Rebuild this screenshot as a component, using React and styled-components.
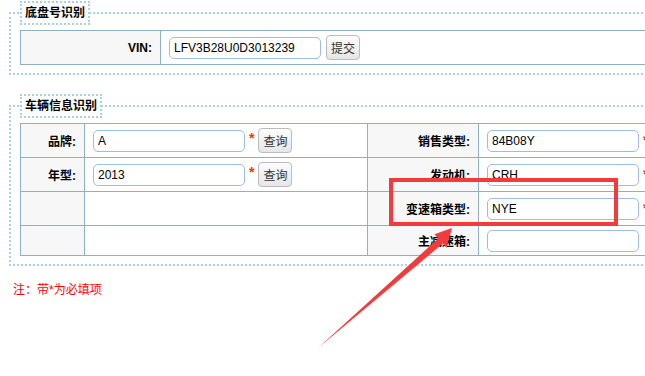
import React from 'react';
import styled, { createGlobalStyle } from 'styled-components';

const GlobalStyle = createGlobalStyle`
  html, body {
    margin: 0;
    padding: 0;
    overflow: hidden;
    background: #fff;
  }
  body {
    font-family: "Liberation Sans", Arial, "Noto Sans CJK SC", sans-serif;
    font-size: 12px;
    color: #000;
  }
`;

const rows = [
  { left: '品牌', leftValue: 'A', right: '销售类型', rightValue: '84B08Y', star: true },
  { left: '年型', leftValue: '2013', right: '发动机', rightValue: 'CRH', star: true },
  { left: '', right: '变速箱类型', rightValue: 'NYE', star: true },
  { left: '', right: '主减速箱', rightValue: '', star: false, short: true },
];

function App() {
  return (
    <Page>
      <GlobalStyle />

      <Group>
        <Legend>底盘号识别</Legend>
        <Table>
          <colgroup>
            <Col $w={140} />
            <col />
          </colgroup>
          <tbody>
            <tr>
              <LabelCell>VIN:</LabelCell>
              <FieldCell>
                <FieldRow>
                  <Input defaultValue="LFV3B28U0D3013239" />
                  <Button $gap={5}>提交</Button>
                </FieldRow>
              </FieldCell>
            </tr>
          </tbody>
        </Table>
      </Group>

      <Group $top={19}>
        <Legend>车辆信息识别</Legend>
        <Table>
          <colgroup>
            <Col $w={64} />
            <Col $w={283} />
            <Col $w={111} />
            <col />
          </colgroup>
          <tbody>
            {rows.map((row) => (
              <tr key={row.right}>
                <LabelCell $h={row.short ? 29 : 33}>{row.left && `${row.left}:`}</LabelCell>
                <FieldCell>
                  {row.left && (
                    <FieldRow>
                      <Input defaultValue={row.leftValue} />
                      <Star>*</Star>
                      <Button>查询</Button>
                    </FieldRow>
                  )}
                </FieldCell>
                <LabelCell $h={row.short ? 29 : 33}>{`${row.right}:`}</LabelCell>
                <FieldCell>
                  <FieldRow>
                    <Input defaultValue={row.rightValue} />
                    {row.star && <Star>*</Star>}
                  </FieldRow>
                </FieldCell>
              </tr>
            ))}
          </tbody>
        </Table>
      </Group>

      <Note>注：带*为必填项</Note>

      {/* screenshot annotation on top of the form */}
      <Mark />
      <Arrow viewBox="0 0 645 376" width="645" height="376">
        <polygon
          points="318,348 442.8,243.6 446.6,247.8 452,228 434.4,234.2 438.2,238.4"
          fill="#f23c3c"
        />
      </Arrow>
    </Page>
  );
}

export default App;

const Page = styled.div`
  position: relative;
  width: 645px;
  height: 376px;
  padding-top: 1px;
  box-sizing: border-box;
  overflow: hidden;
`;

const Group = styled.fieldset`
  margin: ${(p) => p.$top || 0}px 0 0 9px;
  padding: 5px 9px 8px;
  border: 2px dotted #a9d1e4;
  width: 700px;
  min-width: 0;
`;

const Legend = styled.legend`
  margin: 0;
  padding: 0 3px;
  border: 2px dotted #a9d1e4;
  font-weight: bold;
  font-size: 12px;
  line-height: 20px;
  color: #000;
`;

const Table = styled.table`
  width: 100%;
  border-collapse: collapse;
  table-layout: fixed;
`;

const Col = styled.col`
  width: ${(p) => p.$w}px;
`;

const LabelCell = styled.td`
  height: ${(p) => p.$h || 33}px;
  padding: 0 8px 0 0;
  border: 1px solid #8eb0c4;
  background: #f7f7f7;
  text-align: right;
  font-weight: bold;
  white-space: nowrap;
`;

const FieldCell = styled.td`
  padding: 0 0 0 8px;
  border: 1px solid #8eb0c4;
  background: #fff;
`;

const FieldRow = styled.div`
  display: flex;
  align-items: center;
`;

const Input = styled.input`
  width: 152px;
  height: 22px;
  box-sizing: border-box;
  margin: 0;
  padding: 0 4px;
  border: 1px solid #9dbde6;
  border-radius: 5px;
  font: 12px "Liberation Sans", Arial, sans-serif;
  color: #000;
  outline: none;
`;

const Star = styled.span`
  align-self: flex-start;
  margin: 2px 0 0 4px;
  font-size: 14px;
  font-weight: bold;
  line-height: 16px;
  color: #f30;
`;

const Button = styled.button`
  height: 25px;
  margin: 0 0 0 ${(p) => p.$gap || 4}px;
  padding: 0 4px;
  border: 1px solid #bcbcbc;
  border-radius: 4px;
  background: linear-gradient(#fdfdfd, #e6e6e6);
  font: 12px "Liberation Sans", "Noto Sans CJK SC", sans-serif;
  color: #333;
`;

const Note = styled.p`
  margin: 16px 0 0 13px;
  color: #f00;
  font-size: 12px;
  line-height: 16px;
`;

const Mark = styled.div`
  position: absolute;
  left: 389px;
  top: 178px;
  width: 229px;
  height: 48px;
  box-sizing: border-box;
  border: 4px solid #f23c3c;
  pointer-events: none;
`;

const Arrow = styled.svg`
  position: absolute;
  left: 0;
  top: 0;
  pointer-events: none;
`;
